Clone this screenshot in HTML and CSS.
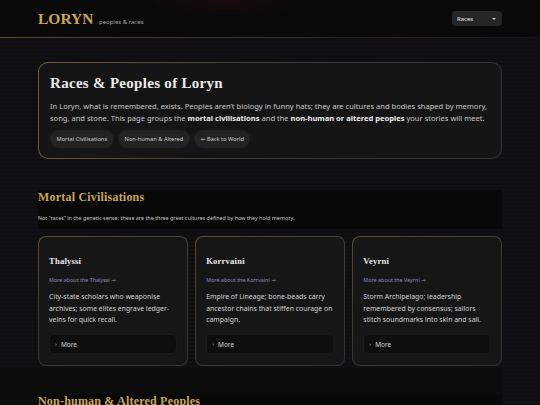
FILE: index.html
```html
<!DOCTYPE html>
<html lang="en">
<head>
<meta charset="utf-8">
<title>Races & Peoples of Loryn</title>
<link rel="stylesheet" href="styles.css">
</head>
<body>
<header class="topbar">
  <div class="brand">
    <span class="logo">LORYN</span>
    <span class="tagline">peoples &amp; races</span>
  </div>
  <div class="select">
    <span>Races</span>
    <span class="caret"></span>
  </div>
</header>

<main class="page">
  <section class="hero">
    <h1 class="hero-title">Races &amp; Peoples of Loryn</h1>
    <p class="hero-text">In Loryn, what is remembered, exists. Peoples aren’t biology in funny hats; they are cultures and bodies shaped by memory, song, and stone. This page groups the <strong>mortal civilisations</strong> and the <strong>non-human or altered peoples</strong> your stories will meet.</p>
    <div class="pills">
      <a class="pill">Mortal Civilisations</a>
      <a class="pill">Non-human &amp; Altered</a>
      <a class="pill"><span class="arrow">←</span>&nbsp;Back to World</a>
    </div>
  </section>

  <section class="group">
    <div class="group-head">
      <h2 class="group-title">Mortal Civilisations</h2>
      <p class="group-desc">Not “races” in the genetic sense; these are the three great cultures defined by how they hold memory.</p>
    </div>
    <div class="cards">
      <article class="card">
        <h3 class="card-title">Thalyssi</h3>
        <a class="card-link">More about the Thalyssi <span class="arrow">→</span></a>
        <p class="card-text">City-state scholars who weaponise archives; some elites engrave ledger-veins for quick recall.</p>
        <div class="more"><span class="chev">›</span>More</div>
      </article>
      <article class="card">
        <h3 class="card-title">Korrvaini</h3>
        <a class="card-link">More about the Korrvaini <span class="arrow">→</span></a>
        <p class="card-text">Empire of Lineage; bone-beads carry ancestor chains that stiffen courage on campaign.</p>
        <div class="more"><span class="chev">›</span>More</div>
      </article>
      <article class="card">
        <h3 class="card-title">Veyrni</h3>
        <a class="card-link">More about the Veyrni <span class="arrow">→</span></a>
        <p class="card-text">Storm Archipelago; leadership remembered by consensus; sailors stitch soundmarks into skin and sail.</p>
        <div class="more"><span class="chev">›</span>More</div>
      </article>
    </div>
  </section>

  <section class="group">
    <div class="group-head">
      <h2 class="group-title">Non-human &amp; Altered Peoples</h2>
      <p class="group-desc">Peoples changed by memory, stone and song.</p>
    </div>
  </section>
</main>
</body>
</html>
```

FILE: styles.css
```css
* { box-sizing: border-box; }

html, body {
  margin: 0;
  padding: 0;
}

body {
  background-color: #0f0f11;
  background-image: repeating-linear-gradient(0deg, #0e0e10 0px, #0e0e10 2px, #111113 2px, #111113 4px);
  color: #d6d6d6;
  font-family: "Noto Sans", "Open Sans", sans-serif;
  height: 405px;
  overflow: hidden;
}

.topbar {
  height: 38px;
  display: flex;
  align-items: center;
  justify-content: space-between;
  padding: 0 38px;
  background: radial-gradient(ellipse 110px 24px at 225px 0px, rgba(70, 18, 18, 0.22), rgba(0,0,0,0) 70%), #0a0909;
  border-bottom: 1px solid transparent;
  border-image: linear-gradient(90deg, #5a4a30, #3a3024 40%, #2a1c1c 80%, #1a1416) 1;
}

.brand {
  display: flex;
  align-items: baseline;
  gap: 5.5px;
  padding-top: 1px;
}

.logo {
  font-family: "Liberation Serif", "Times New Roman", serif;
  font-weight: 700;
  font-size: 15.5px;
  color: #c9a65a;
}

.tagline {
  font-size: 6px;
  color: #a8a8a8;
}

.select {
  width: 50px;
  height: 15px;
  border-radius: 4px;
  background: #262626;
  display: flex;
  align-items: center;
  justify-content: space-between;
  padding: 0 6px 0 5px;
  font-size: 6px;
  color: #e6e6e6;
}

.caret {
  width: 0;
  height: 0;
  border-left: 2.5px solid transparent;
  border-right: 2.5px solid transparent;
  border-top: 2.5px solid #cfcfcf;
}

.arrow {
  font-family: "DejaVu Sans", sans-serif;
}

.page {
  padding: 24px 0 0 0;
}

.hero {
  margin: 0 38px;
  padding: 11px 11px 10px;
  border: 1px solid transparent;
  border-radius: 10px;
  background:
    linear-gradient(#151515, #151515) padding-box,
    linear-gradient(100deg, #6e5d3c 0%, #4a4236 35%, #353535 70%, #333 100%) border-box;
}

.hero-title {
  margin: 0;
  font-family: "Liberation Serif", "Times New Roman", serif;
  font-weight: 700;
  font-size: 15px;
  line-height: 19px;
  color: #ebebeb;
  letter-spacing: 0.3px;
}

.hero-text {
  margin: 7px 0 0;
  font-size: 7.55px;
  line-height: 12px;
  color: #c8c8c8;
}

.hero-text strong {
  color: #ececec;
  font-weight: 700;
}

.pills {
  display: flex;
  gap: 4.5px;
  margin-top: 6px;
}

.pill {
  height: 18px;
  display: flex;
  align-items: center;
  padding: 0 6.5px;
  border-radius: 9px;
  background: #232323;
  font-size: 5.7px;
  color: #cecece;
}

.group {
  margin-top: 2px;
  margin-right: 38px;
  padding: 29px 0 0 38px;
}

.group + .group {
  padding-top: 26px;
  background: #0c0c0d;
}

.group-head {
  background: #080808;
  padding: 0 0 7px;
}

.group-title {
  margin: 0;
  font-family: "Liberation Serif", "Times New Roman", serif;
  font-weight: 700;
  font-size: 12px;
  line-height: 14px;
  color: #c9a65a;
  letter-spacing: 0.2px;
}

.group-desc {
  margin: 11px 0 0;
  font-size: 5.4px;
  line-height: 7px;
  color: #c6c6c6;
}

.cards {
  display: grid;
  grid-template-columns: repeat(3, 1fr);
  gap: 7.5px;
  margin-top: 7px;
}

.card {
  height: 130px;
  padding: 10px 10px 11px;
  border: 1px solid transparent;
  border-radius: 8px;
  background:
    linear-gradient(#161617, #161617) padding-box,
    linear-gradient(160deg, #5c4e33 0%, #3e3a33 45%, #343434 100%) border-box;
  display: flex;
  flex-direction: column;
}

.card-title {
  margin: 9px 0 0;
  font-family: "Liberation Serif", "Times New Roman", serif;
  font-weight: 700;
  font-size: 8.6px;
  line-height: 10px;
  color: #ebebeb;
  letter-spacing: 0.2px;
}

.card-link {
  margin-top: 11px;
  font-size: 5.4px;
  line-height: 7px;
  color: #8f8ad0;
}

.card-text {
  margin: 7px 0 0;
  font-size: 6.9px;
  line-height: 11.5px;
  color: #d4d4d4;
}

.more {
  margin-top: auto;
  height: 20px;
  border-radius: 5px;
  background: #0e0e0f;
  border: 1px solid #1b1b1c;
  display: flex;
  align-items: center;
  padding: 0 5px;
  font-size: 6.5px;
  color: #d6d6d6;
}

.chev {
  font-size: 6px;
  color: #bbbbbb;
  margin-right: 4px;
}
```
